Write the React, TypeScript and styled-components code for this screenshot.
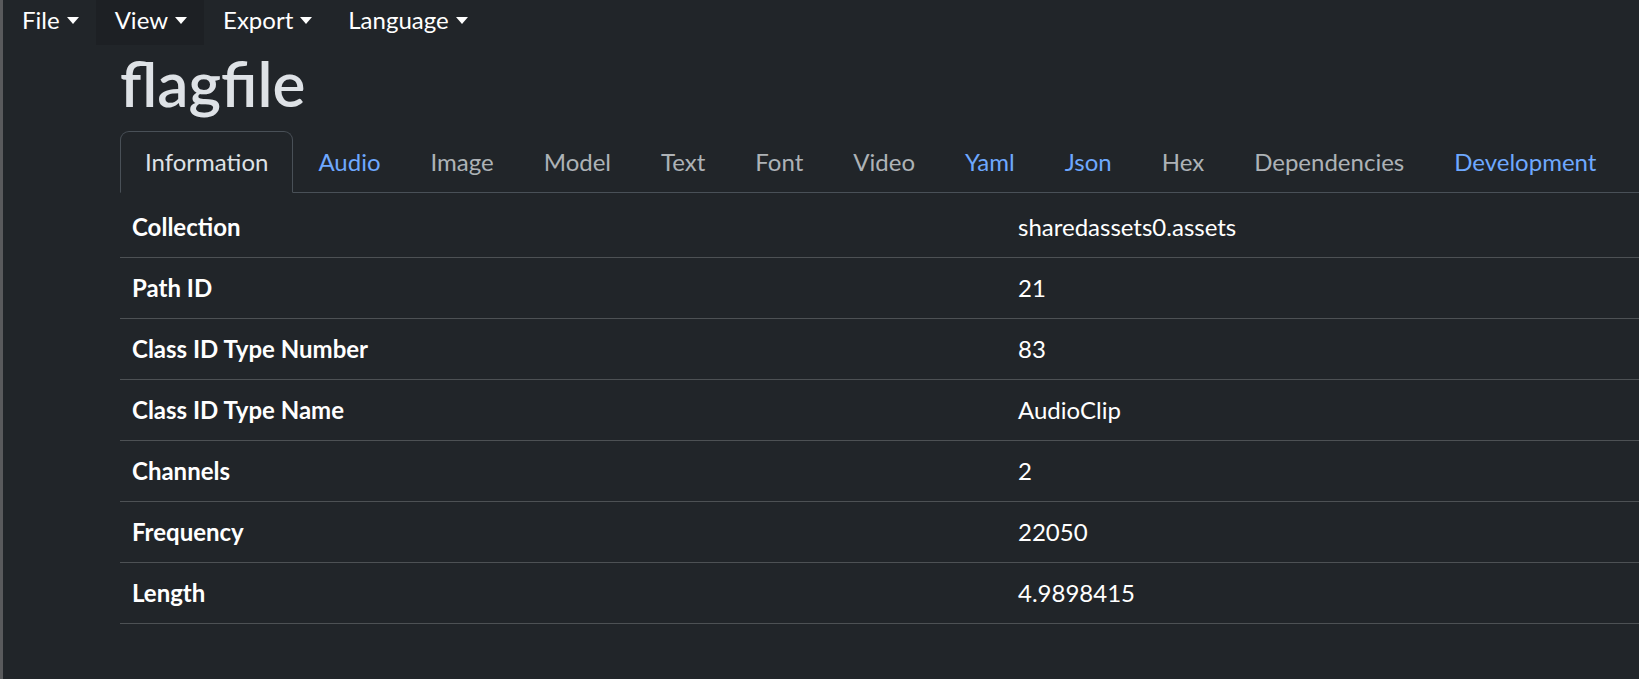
import React from "react";
import styled, { createGlobalStyle } from "styled-components";

const Global = createGlobalStyle`
  html, body { margin: 0; padding: 0; background: #212529; }
  body {
    min-height: 679px;
    border-left: 3px solid #595a5c;
    font-family: "Lato", "Noto Sans", sans-serif;
    color: #dee2e6;
    overflow: hidden;
  }
`;

const Page = styled.div`
  display: flex;
  flex-direction: column;
`;

const MenuBar = styled.nav`
  display: flex;
  height: 45px;
`;

const MenuItem = styled.div<{ $active?: boolean }>`
  display: flex;
  align-items: center;
  padding: 0 17px 6px 19px;
  background: ${(p) => (p.$active ? "#1d2024" : "transparent")};
  color: #ffffff;
  font-size: 24px;
  line-height: 36px;
  &::after {
    content: "";
    display: inline-block;
    margin-left: 7px;
    margin-top: 2px;
    border-top: 7px solid #ffffff;
    border-left: 6px solid transparent;
    border-right: 6px solid transparent;
  }
`;

const Main = styled.main`
  padding-left: 117px;
`;

const Title = styled.h1`
  margin: 0 0 12px 0;
  padding-top: 2px;
  font-size: 62px;
  line-height: 72px;
  font-weight: 600;
  color: #dee2e6;
`;

const TabList = styled.div`
  display: flex;
  border-bottom: 1px solid #495057;
`;

const Tab = styled.div<{ $kind: "active" | "link" | "disabled" }>`
  padding: 12px 24px;
  font-size: 24px;
  line-height: 36px;
  margin-bottom: -1px;
  border: 1px solid transparent;
  border-top-left-radius: 9px;
  border-top-right-radius: 9px;
  color: ${(p) =>
    p.$kind === "active" ? "#dee2e6" : p.$kind === "link" ? "#6ea8fe" : "rgba(222,226,230,0.75)"};
  ${(p) =>
    p.$kind === "active" &&
    `border-color: #495057 #495057 #212529; background: #212529;`}
`;

const Table = styled.div`
  margin-top: 4px;
  display: grid;
  grid-template-columns: 886px 1fr;
`;

const Cell = styled.div<{ $head?: boolean }>`
  padding: 12px;
  font-size: 24px;
  line-height: 36px;
  color: #ffffff;
  font-weight: ${(p) => (p.$head ? 700 : 400)};
  border-bottom: 1px solid #4d5154;
`;

const tabs: { label: string; kind: "active" | "link" | "disabled" }[] = [
  { label: "Information", kind: "active" },
  { label: "Audio", kind: "link" },
  { label: "Image", kind: "disabled" },
  { label: "Model", kind: "disabled" },
  { label: "Text", kind: "disabled" },
  { label: "Font", kind: "disabled" },
  { label: "Video", kind: "disabled" },
  { label: "Yaml", kind: "link" },
  { label: "Json", kind: "link" },
  { label: "Hex", kind: "disabled" },
  { label: "Dependencies", kind: "disabled" },
  { label: "Development", kind: "link" },
];

const rows: [string, string][] = [
  ["Collection", "sharedassets0.assets"],
  ["Path ID", "21"],
  ["Class ID Type Number", "83"],
  ["Class ID Type Name", "AudioClip"],
  ["Channels", "2"],
  ["Frequency", "22050"],
  ["Length", "4.9898415"],
];

export default function App() {
  return (
    <Page>
      <Global />
      <MenuBar>
        <MenuItem>File</MenuItem>
        <MenuItem $active>View</MenuItem>
        <MenuItem>Export</MenuItem>
        <MenuItem>Language</MenuItem>
      </MenuBar>
      <Main>
        <Title>flagfile</Title>
        <TabList>
          {tabs.map((t) => (
            <Tab key={t.label} $kind={t.kind}>
              {t.label}
            </Tab>
          ))}
        </TabList>
        <Table>
          {rows.map(([k, v]) => (
            <React.Fragment key={k}>
              <Cell $head>{k}</Cell>
              <Cell>{v}</Cell>
            </React.Fragment>
          ))}
        </Table>
      </Main>
    </Page>
  );
}
